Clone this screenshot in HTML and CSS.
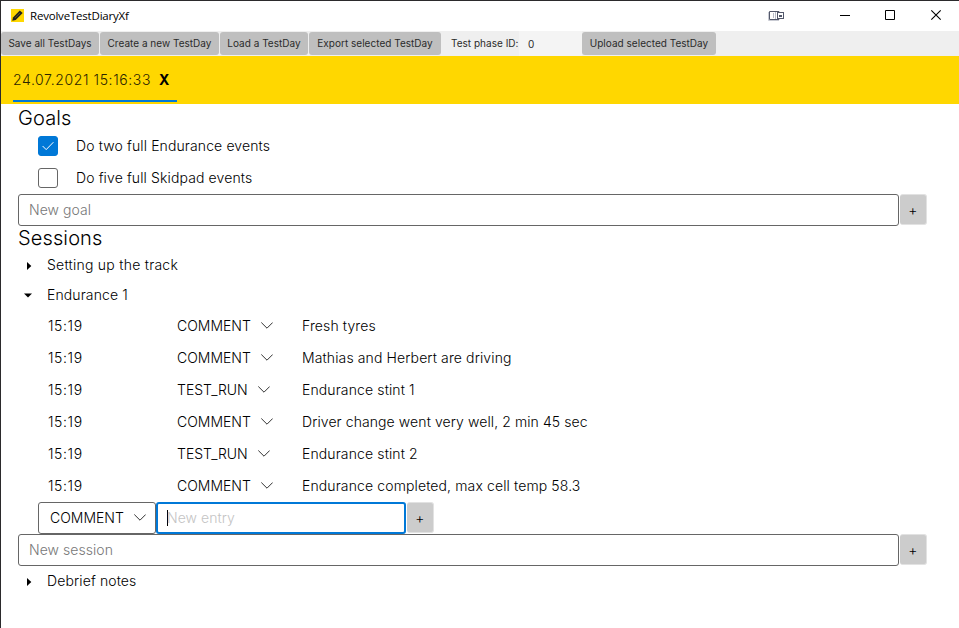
FILE: index.html
```html
<!DOCTYPE html>
<html lang="en">
<head>
<meta charset="utf-8">
<title>RevolveTestDiaryXf</title>
<link rel="stylesheet" href="styles.css">
</head>
<body>
<svg class="defs" width="0" height="0">
  <symbol id="chevron" viewBox="0 0 12 7"><path d="M0.3 0.5L6 6.2L11.7 0.5" fill="none" stroke="currentColor" stroke-width="1"/></symbol>
  <symbol id="right" viewBox="0 0 5 8"><path d="M0 0L4.3 4L0 8Z"/></symbol>
  <symbol id="down" viewBox="0 0 8 5"><path d="M0 0.5H8L4 4.5Z"/></symbol>
</svg>
<div class="window">
  <header class="titlebar">
    <svg class="app-icon" width="13" height="13" viewBox="0 0 13 13"><rect width="13" height="13" fill="#ffd800"/><path d="M1.2 11.8L2 8.4L8.8 1.4L11.7 4L4.7 11Z" fill="#222"/><path d="M4 8.9L8.9 4" stroke="#8a7500" stroke-width=".7"/></svg>
    <span class="title">RevolveTestDiaryXf</span>
    <svg class="dock-icon" width="16" height="11" viewBox="0 0 16 11"><path d="M0.5 2V10.5H11" fill="none" stroke="#c9cbd3"/><path d="M1.5 1.5H11V9.5H1.5Z" fill="#fff" stroke="#53586b"/><path d="M5.5 3V8M7.5 2V9" stroke="#b9bcc8"/><rect x="9.5" y="2.5" width="6" height="6" fill="#fff" stroke="#53586b"/><rect x="11" y="5" width="3" height="2" fill="#53586b"/></svg>
    <svg class="controls" width="102" height="12" viewBox="0 0 102 12" fill="none" stroke="#000"><path d="M0 6.5H10M45.5 1.5H54.5V10.5H45.5Z"/><path d="M91.3 1.3L100.7 10.7M100.7 1.3L91.3 10.7" stroke-width="1.1"/></svg>
  </header>
  <nav class="toolbar">
    <button class="tool save">Save all TestDays</button>
    <button class="tool create">Create a new TestDay</button>
    <button class="tool load">Load a TestDay</button>
    <button class="tool export">Export selected TestDay</button>
    <span class="phase">Test phase ID:</span>
    <span class="phase-value">0</span>
    <button class="tool upload">Upload selected TestDay</button>
  </nav>
  <div class="tabs">
    <div class="tab"><span class="date">24.07.2021 15:16:33</span><b>X</b></div>
  </div>
  <main>
    <h2>Goals</h2>
    <div class="goal"><span class="check on"><svg width="12" height="10" viewBox="0 0 12 10"><path d="M0.6 5L4.2 8.6L11.4 1.2" fill="none" stroke="#fff"/></svg></span><span>Do two full Endurance events</span></div>
    <div class="goal"><span class="check"></span><span>Do five full Skidpad events</span></div>
    <div class="adder"><div class="field">New goal</div><button class="plus">+</button></div>
    <h2 class="sessions">Sessions</h2>
    <div class="node"><svg class="arrow-right" width="5" height="8"><use href="#right"/></svg><span class="wide">Setting up the track</span></div>
    <div class="node open"><svg class="arrow-down" width="8" height="5"><use href="#down"/></svg><span>Endurance 1</span></div>
    <div class="entry"><span class="time">15:19</span><span class="kind"><span>COMMENT</span><svg width="12" height="7"><use href="#chevron"/></svg></span><span>Fresh tyres</span></div>
    <div class="entry"><span class="time">15:19</span><span class="kind"><span>COMMENT</span><svg width="12" height="7"><use href="#chevron"/></svg></span><span>Mathias and Herbert are driving</span></div>
    <div class="entry"><span class="time">15:19</span><span class="kind"><span>TEST_RUN</span><svg width="12" height="7"><use href="#chevron"/></svg></span><span>Endurance stint 1</span></div>
    <div class="entry"><span class="time">15:19</span><span class="kind"><span>COMMENT</span><svg width="12" height="7"><use href="#chevron"/></svg></span><span class="tight">Driver change went very well, 2 min 45 sec</span></div>
    <div class="entry"><span class="time">15:19</span><span class="kind"><span>TEST_RUN</span><svg width="12" height="7"><use href="#chevron"/></svg></span><span>Endurance stint 2</span></div>
    <div class="entry"><span class="time">15:19</span><span class="kind"><span>COMMENT</span><svg width="12" height="7"><use href="#chevron"/></svg></span><span>Endurance completed, max cell temp 58.3</span></div>
    <div class="adder new-entry"><div class="select"><span class="kind"><span>COMMENT</span><svg width="12" height="7"><use href="#chevron"/></svg></span></div><div class="field focused"><i class="caret"></i>New entry</div><button class="plus">+</button></div>
    <div class="adder"><div class="field">New session</div><button class="plus">+</button></div>
    <div class="node"><svg class="arrow-right" width="5" height="8"><use href="#right"/></svg><span>Debrief notes</span></div>
  </main>
</div>
</body>
</html>
```
FILE: styles.css
```css
* { box-sizing: border-box; }
body { margin: 0; background: #fff; color: #000; font: 300 14px/20px Inter, "Liberation Sans", sans-serif; letter-spacing: .12px; }
.defs { position: absolute; }
.window { height: 628px; overflow: hidden; border-left: 1px solid #2b2a2c; border-top: 1px solid #2b2a2c; white-space: nowrap; }
.titlebar { height: 30px; display: flex; align-items: center; padding-left: 10px; }
.app-icon { margin: -1px 6px 0 0; }
.title { font: 400 11.5px/16px "Open Sans", sans-serif; width: 120px; letter-spacing: -0.2px; margin-top: -1px; }
.dock-icon { margin: -1px 0 0 618px; }
.controls { margin: -2px 0 0 56px; }
.toolbar { height: 25px; background: #efefef; display: flex; align-items: center; font-size: 10px; letter-spacing: 0.02px; color: #2b2b2b; }
button { border: 0; padding: 0; font: inherit; color: inherit; letter-spacing: inherit; }
.tool { height: 23px; border-radius: 3px; background: #bfbfbf; text-align: center; font-weight: 400; padding-bottom: 2px; }
.save { width: 98px; margin-right: 1px; }
.create { width: 119px; margin-right: 1px; }
.load { width: 88px; margin-right: 1px; }
.export { width: 132px; }
.phase { width: 78px; padding: 0 0 2px 10px; font-weight: 400; }
.phase-value { width: 63px; height: 25px; line-height: 26px; padding-left: 9px; background: #f4f4f4; font-weight: 400; }
.upload { width: 134px; }
.tabs { height: 48px; background: #ffd700; padding-left: 12px; }
.tab { width: 164px; height: 46px; border-bottom: 2px solid #0078d7; display: flex; line-height: 48px; }
.date { width: 146px; letter-spacing: .6px; color: #2c2500; }
b { font-weight: 700; }
main { padding-left: 17px; }
h2 { margin: 0; font-size: 20px; font-weight: 300; height: 26px; line-height: 28px; }
.sessions { height: 24px; line-height: 24px; }
.goal { height: 32px; display: flex; align-items: center; padding-left: 20px; }
.check { width: 20px; height: 20px; border: 1px solid #666; border-radius: 3px; margin-right: 18px; display: grid; place-items: center; }
.on { background: #0078d7; border-color: #0078d7; }
.adder { height: 32px; display: flex; align-items: center; }
.field { width: 881px; height: 32px; border: 1px solid #666; border-radius: 3px; padding-left: 10px; line-height: 30px; color: #777; letter-spacing: 0.05px; }
.plus { width: 27px; height: 31px; margin: 0 0 1px 1px; border: 1px solid #e2e2e2; border-left-width: 0; border-radius: 3px; background: #ccc; font-size: 14px; color: #000; text-align: center; }
.node { height: 30px; display: flex; align-items: center; }
.wide { letter-spacing: .25px; }
.tight { letter-spacing: .09px; }
.arrow-right { margin: 2px 15px 0 9px; }
.arrow-down { margin: 0 15px 0 6px; }
.entry { height: 32px; display: flex; align-items: center; padding-left: 30px; }
.time { width: 129px; letter-spacing: .6px; }
.kind { width: 125px; display: flex; align-items: center; letter-spacing: 0; }
.kind svg { margin: -1px 0 0 10px; color: #333; }
.new-entry { padding-left: 20px; }
.select { width: 118px; height: 32px; border: 1px solid #666; border-radius: 3px; padding: 5px 0 0 11px; }
.focused { width: 250px; border: 2px solid #0078d7; color: #c4c4c4; line-height: 28px; padding-left: 9px; display: flex; align-items: center; }
.caret { width: 1px; height: 16px; background: #000; margin-right: -1px; }
```
